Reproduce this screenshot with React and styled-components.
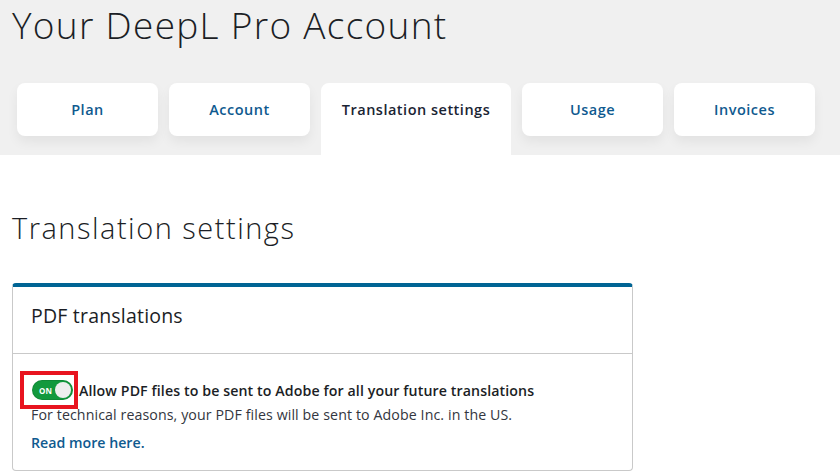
import React from 'react';
import styled, { createGlobalStyle } from 'styled-components';

const GlobalStyle = createGlobalStyle`
  body {
    margin: 0;
    background: #ffffff;
    font-family: "Open Sans", "Liberation Sans", sans-serif;
    color: #1b1e25;
  }
`;

const Top = styled.header`
  background: #f0f0f0;
  padding: 0 12px;
`;

const Title = styled.h1`
  margin: 0;
  padding-top: 3px;
  font-family: "Open Sans", sans-serif;
  font-weight: 300;
  font-size: 37px;
  line-height: 44px;
  letter-spacing: 1.3px;
  color: #1b1e25;
`;

const Tabs = styled.nav`
  display: flex;
  gap: 11px;
  padding: 36px 0 0 5px;
  align-items: flex-start;
`;

const Tab = styled.a`
  display: flex;
  justify-content: center;
  align-items: flex-start;
  box-sizing: border-box;
  width: ${(p) => (p.$active ? '190px' : '141px')};
  height: ${(p) => (p.$active ? '72px' : '53px')};
  padding-top: 17px;
  background: #ffffff;
  border-radius: ${(p) => (p.$active ? '8px 8px 0 0' : '8px')};
  box-shadow: ${(p) => (p.$active ? 'none' : '0 6px 12px rgba(0, 0, 0, 0.06)')};
  font-family: "Open Sans", sans-serif;
  font-weight: 600;
  font-size: 14.5px;
  letter-spacing: 0.5px;
  color: ${(p) => (p.$active ? '#1a2433' : '#0f5a8f')};
  text-decoration: none;
  margin-bottom: ${(p) => (p.$active ? '0' : '19px')};
`;

const Main = styled.main`
  padding: 0 12px;
`;

const Heading = styled.h2`
  margin: 0;
  padding: 55px 0 37px;
  font-family: "Open Sans", sans-serif;
  font-weight: 300;
  font-size: 29px;
  line-height: 36px;
  letter-spacing: 1.5px;
  color: #1b1e25;
`;

const Card = styled.section`
  width: 621px;
  box-sizing: border-box;
  border: 1px solid #c9c9c9;
  border-top: 4px solid #006494;
  border-radius: 4px;
`;

const CardHeader = styled.div`
  box-sizing: border-box;
  padding: 15px 18px 0;
  height: 67px;
  border-bottom: 1px solid #c9c9c9;
  font-size: 19.5px;
  line-height: 28px;
  letter-spacing: 0.2px;
  color: #1b1e25;
`;

const CardBody = styled.div`
  padding: 22px 18px 17px;
`;

const ToggleRow = styled.label`
  display: flex;
  align-items: center;
  height: 28px;
  font-size: 14.2px;
  font-weight: 600;
  letter-spacing: 0.1px;
  color: #1b1e25;
  margin-left: -11px;
`;

const Highlight = styled.span`
  display: inline-flex;
  border: 4px solid #e8141f;
  padding: 5px 1px 5px 8px;
  margin: -5px 1px -5px 0;
`;

const Switch = styled.span`
  position: relative;
  display: inline-flex;
  align-items: center;
  width: 41px;
  height: 20px;
  border-radius: 10px;
  background: #12993d;
  box-sizing: border-box;
  box-shadow: inset 0 0 0 1px rgba(0, 0, 0, 0.1);
  font-size: 8px;
  font-weight: 700;
  color: #ffffff;
  padding-left: 7px;
  letter-spacing: 0.2px;
`;

const Knob = styled.span`
  position: absolute;
  right: 2px;
  top: 2px;
  width: 16px;
  height: 16px;
  border-radius: 50%;
  background: #eeeeee;
`;

const Note = styled.p`
  margin: 1px 0 0;
  font-size: 14.2px;
  line-height: 20px;
  letter-spacing: 0.1px;
  color: #333640;
`;

const More = styled.a`
  display: inline-block;
  margin-top: 8px;
  font-size: 14.2px;
  line-height: 20px;
  font-weight: 600;
  color: #0f5a8f;
  text-decoration: none;
`;

const tabs = ['Plan', 'Account', 'Translation settings', 'Usage', 'Invoices'];

export default function App() {
  return (
    <>
      <GlobalStyle />
      <Top>
        <Title>Your DeepL Pro Account</Title>
        <Tabs>
          {tabs.map((t) => (
            <Tab key={t} href="#" $active={t === 'Translation settings'}>
              {t}
            </Tab>
          ))}
        </Tabs>
      </Top>
      <Main>
        <Heading>Translation settings</Heading>
        <Card>
          <CardHeader>PDF translations</CardHeader>
          <CardBody>
            <ToggleRow>
              <Highlight>
                <Switch>
                  ON
                  <Knob />
                </Switch>
              </Highlight>
              Allow PDF files to be sent to Adobe for all your future translations
            </ToggleRow>
            <Note>For technical reasons, your PDF files will be sent to Adobe Inc. in the US.</Note>
            <More href="#">Read more here.</More>
          </CardBody>
        </Card>
      </Main>
    </>
  );
}
